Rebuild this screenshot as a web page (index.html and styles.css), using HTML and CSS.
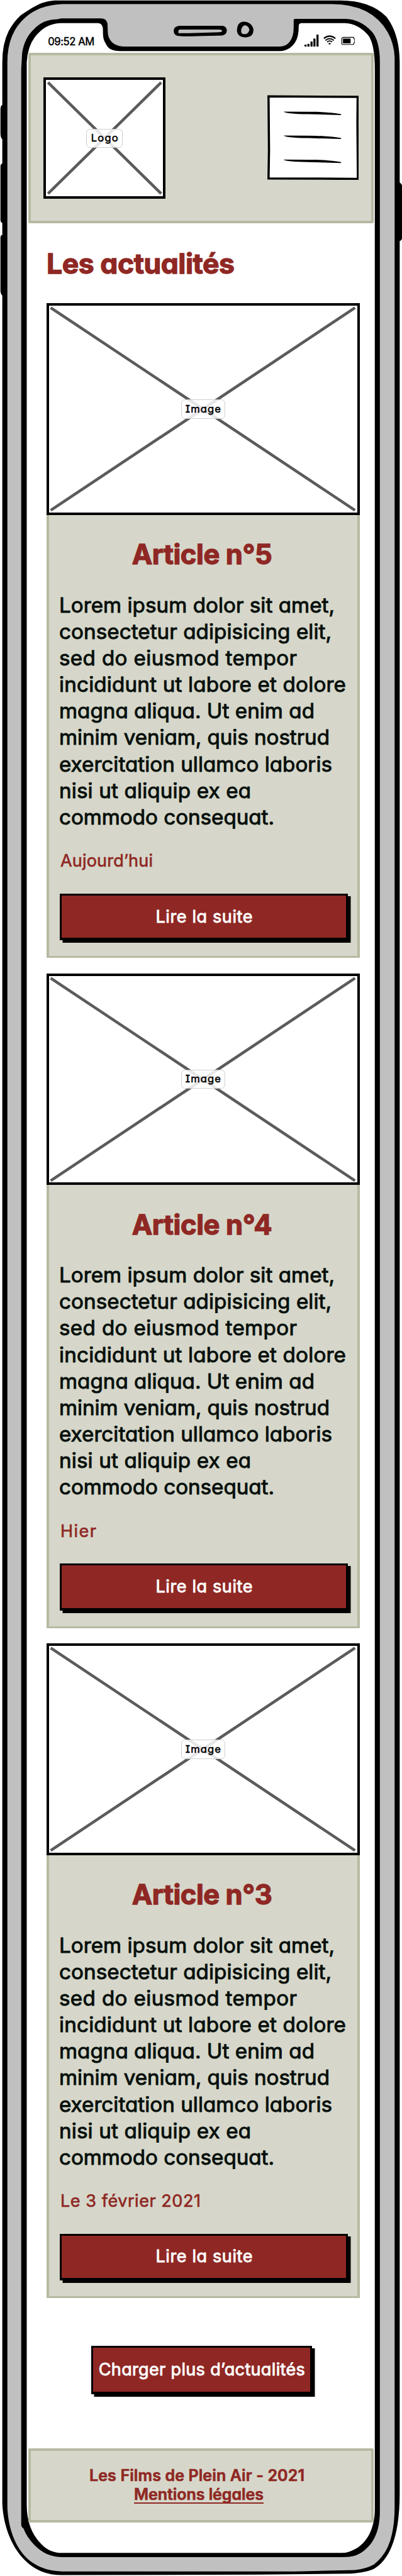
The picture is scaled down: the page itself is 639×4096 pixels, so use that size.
FILE: index.html
```
<!DOCTYPE html>
<html lang="fr">
<head>
<meta charset="utf-8">
<title>Les actualités</title>
<link rel="stylesheet" href="styles.css">
</head>
<body>
<div class="phone">
  <svg class="shell" viewBox="0 0 872 5590" preserveAspectRatio="none" aria-hidden="true">
    <!-- side buttons -->
    <path d="M16 228H5Q1 229 1 238V288Q1 299 5 302H16ZM16 355H5Q1 356 1 362V478Q2 484 6 484H16ZM16 510H4Q1 511 1 516V632Q2 640 6 642H16ZM856 396H867Q872 399 872 403V516Q872 522 867 523H856Z"/>
    <!-- body -->
    <path d="M118 1Q105 2 92 6C76 12 60 23 45 33Q29 48 19 67Q5 95 5 135V5430C6 5482 30 5555 90 5580Q110 5588 135 5588L560 5587L760 5585Q796 5582 812 5574Q850 5551 862 5480Q867 5450 867 5410V135C867 90 855 58 838 36Q803 1 738 1Z"/>
    <path fill="#c0c0c0" d="M135 9Q85 11 55 38Q16 72 16 135V5440C17 5478 30 5530 66 5558Q96 5580 135 5580H640L770 5577Q795 5574 811 5565Q841 5542 850 5500Q856 5475 856 5440V125Q855 95 841 70Q806 9 720 9Z"/>
    <path d="M133 40H219Q230 40 233 50C234 60 233 73 236 81Q244 101 270 101H607Q620 101 628 91Q637 80 637 60V44Q637 41 640 41H750Q782 42 806 68Q824 88 824 135V5450C824 5490 812 5522 781 5541Q768 5549 745 5549H135Q100 5549 75 5523Q58 5506 51 5487Q46 5484 46 5478V150L48 115Q53 82 74 63Q94 42 123 42Z"/>
    <path fill="#fff" d="M131 50H212Q221 50 223 60C224 70 222 82 228 92C235 106 240 111 270 111H607Q628 110 640 92Q648 80 648 58V55Q649 50 654 50H748Q778 51 800 78Q813 98 813 150V5445C813 5488 795 5525 758 5537Q750 5540 740 5540H135Q107 5540 89 5520Q58 5489 58 5435V135Q60 101 76 80Q98 51 131 50Z"/>
    <!-- speaker and camera -->
    <path d="M393 56H482Q492 57 492 67Q491 76 482 77L425 78.500Q402 79 392 78.500Q377 78 377 69V64Q379 56 393 56Z"/>
    <path fill="#c0c0c0" d="M390 64H477Q482 65 482 68Q480 70 475 70L410 72H387V67Q387 65 390 64Z"/>
    <path d="M529 47Q547 48 550 65Q549 80 535 81Q516 82 514 68Q514 47 529 47Z"/>
    <path fill="#c0c0c0" d="M532 54.500Q540 57 541 65Q538 74 531 74Q523 75 523 67Q524 56 532 54.500Z"/>
  </svg>

  <div class="screen">
    <div class="status">
      <span class="time"><span class="fit" data-w="74">09:52 AM</span></span>
      <svg class="status-icons" viewBox="0 0 110 28" aria-hidden="true">
        <path d="M0 22h4.500v4H0zM6.300 20h4.500v6H6.300zM13 15h4.500v11H13zM19.300 8.500h4.500V26h-4.500zM26 0h4.500v26H26z"/>
        <g fill="none" stroke="#000" stroke-width="3"><path d="M42 8.500Q54.500-2 67 8.500"/><path d="M45.500 12.500Q54.500 5.500 63.500 12.500" stroke-width="2.600"/><path d="M49 16Q54.500 11.500 60 16" stroke-width="2.400"/></g>
        <path d="M51.500 19.500Q54.500 17 57.500 19.500L54.500 22Z"/>
        <path d="M84 6h22.500l1.500 4 1 1v6l-1.500 1-1 3.500H82l-1-1.500V7.500z" fill="none" stroke="#000" stroke-width="1.600"/>
        <path d="M83.500 8.500h16.500v10.500h-16.500z"/>
      </svg>
    </div>

    <header class="header">
      <div class="placeholder logo">
        <svg viewBox="0 0 265 263" preserveAspectRatio="none" aria-hidden="true"><path d="M10 11L255 252M255 11L10 252"/></svg>
        <span class="tag"><span class="fit" data-w="43">Logo</span></span>
      </div>
      <svg class="menu" viewBox="0 0 198 184" aria-hidden="true">
        <path class="menu-box" d="M2.500 3L196 4L195.500 60L196.500 182L100 181.500L2.500 181L3.500 120Z"/>
        <path d="M35.500 36Q75 36 108 36.500Q145 38 160 41.500L160 43.500L90 41.500Q38 41 35.500 36ZM35.500 88Q75 88 108 88.500Q145 90 160 93.500L160 95.500L90 93.500Q38 93 35.500 88ZM35.500 140Q75 140 108 140.500Q145 142 160 145.500L160 147.500L90 145.500Q38 145 35.500 140Z"/>
      </svg>
    </header>

    <main class="news">
      <h1 class="heading"><span class="fit" data-w="299">Les actualités</span></h1>

      <article class="card">
        <div class="placeholder photo">
          <svg viewBox="0 0 679 459" preserveAspectRatio="none" aria-hidden="true"><path d="M9 10L669 449M669 10L9 449"/></svg>
          <span class="tag"><span class="fit" data-w="56">Image</span></span>
        </div>
        <h2 class="title"><span class="fit" data-w="223">Article n°5</span></h2>
        <p class="text">
          <span class="fit" data-w="438">Lorem ipsum dolor sit amet,</span>
          <span class="fit" data-w="433">consectetur adipisicing elit,</span>
          <span class="fit" data-w="378">sed do eiusmod tempor</span>
          <span class="fit" data-w="456">incididunt ut labore et dolore</span>
          <span class="fit" data-w="406">magna aliqua. Ut enim ad</span>
          <span class="fit" data-w="430">minim veniam, quis nostrud</span>
          <span class="fit" data-w="434">exercitation ullamco laboris</span>
          <span class="fit" data-w="305">nisi ut aliquip ex ea</span>
          <span class="fit" data-w="342">commodo consequat.</span>
        </p>
        <p class="date"><span class="fit" data-w="147">Aujourd’hui</span></p>
        <a class="button more"><span class="fit" data-w="154">Lire la suite</span></a>
      </article>

      <article class="card">
        <div class="placeholder photo">
          <svg viewBox="0 0 679 459" preserveAspectRatio="none" aria-hidden="true"><path d="M9 10L669 449M669 10L9 449"/></svg>
          <span class="tag"><span class="fit" data-w="56">Image</span></span>
        </div>
        <h2 class="title"><span class="fit" data-w="223">Article n°4</span></h2>
        <p class="text">
          <span class="fit" data-w="438">Lorem ipsum dolor sit amet,</span>
          <span class="fit" data-w="433">consectetur adipisicing elit,</span>
          <span class="fit" data-w="378">sed do eiusmod tempor</span>
          <span class="fit" data-w="456">incididunt ut labore et dolore</span>
          <span class="fit" data-w="406">magna aliqua. Ut enim ad</span>
          <span class="fit" data-w="430">minim veniam, quis nostrud</span>
          <span class="fit" data-w="434">exercitation ullamco laboris</span>
          <span class="fit" data-w="305">nisi ut aliquip ex ea</span>
          <span class="fit" data-w="342">commodo consequat.</span>
        </p>
        <p class="date"><span class="fit" data-w="57">Hier</span></p>
        <a class="button more"><span class="fit" data-w="154">Lire la suite</span></a>
      </article>

      <article class="card">
        <div class="placeholder photo">
          <svg viewBox="0 0 679 459" preserveAspectRatio="none" aria-hidden="true"><path d="M9 10L669 449M669 10L9 449"/></svg>
          <span class="tag"><span class="fit" data-w="56">Image</span></span>
        </div>
        <h2 class="title"><span class="fit" data-w="223">Article n°3</span></h2>
        <p class="text">
          <span class="fit" data-w="438">Lorem ipsum dolor sit amet,</span>
          <span class="fit" data-w="433">consectetur adipisicing elit,</span>
          <span class="fit" data-w="378">sed do eiusmod tempor</span>
          <span class="fit" data-w="456">incididunt ut labore et dolore</span>
          <span class="fit" data-w="406">magna aliqua. Ut enim ad</span>
          <span class="fit" data-w="430">minim veniam, quis nostrud</span>
          <span class="fit" data-w="434">exercitation ullamco laboris</span>
          <span class="fit" data-w="305">nisi ut aliquip ex ea</span>
          <span class="fit" data-w="342">commodo consequat.</span>
        </p>
        <p class="date"><span class="fit" data-w="223">Le 3 février 2021</span></p>
        <a class="button more"><span class="fit" data-w="154">Lire la suite</span></a>
      </article>

      <a class="button load"><span class="fit" data-w="328">Charger plus d’actualités</span></a>
    </main>

    <footer class="footer">
      <span class="copyright"><span class="fit" data-w="342">Les Films de Plein Air - 2021</span></span>
      <a class="legal"><span class="fit" data-w="206">Mentions légales</span></a>
    </footer>
  </div>
</div>
<script src="fit.js"></script>
</body>
</html>
```
FILE: styles.css
```
:root {
  --red: #8f2824;
  --sage: #d6d7ca;
  --sage-edge: #b7b9a2;
}

* { box-sizing: border-box; }

body {
  margin: 0;
  background: #fff;
  color: #000;
  font-family: Inter, "Noto Sans", sans-serif;
  font-feature-settings: "cv11", "cv08";
}

h1, h2, p { margin: 0; }

.phone {
  position: relative;
  width: 639px;
  height: 4096px;
  overflow: hidden;
}

.shell {
  position: absolute;
  inset: 0;
  width: 639px;
  height: 4096px;
}

.screen {
  position: relative;
  display: flex;
  flex-direction: column;
  width: 549.600px;
  margin-left: 44.700px;
}

.fit {
  display: inline-block;
  white-space: nowrap;
}

/* Status bar */
.status {
  display: flex;
  justify-content: space-between;
  align-items: flex-start;
  height: 84.300px;
  padding: 56px 30px 0 31.500px;
}

.time {
  font-size: 16.600px;
  line-height: 20px;
  -webkit-text-stroke: 0.500px #000;
}

.status-icons {
  width: 80.600px;
  height: 20.500px;
  margin-top: -1.500px;
}

/* Header */
.header {
  display: flex;
  justify-content: space-between;
  align-items: center;
  height: 271px;
  padding: 0 20.300px;
  border: 4px solid var(--sage-edge);
  border-radius: 2px;
  background: var(--sage);
}

.placeholder {
  display: grid;
  place-items: center;
  background: #fff;
  border: 4px solid #000;
}

.placeholder > svg {
  grid-area: 1 / 1;
  width: calc(100% + 8px);
  height: calc(100% + 8px);
  margin: -4px;
  fill: none;
  stroke: #5b5b5d;
  stroke-width: 6.200;
}

.tag {
  grid-area: 1 / 1;
  z-index: 1;
  display: grid;
  place-items: center;
  width: 70.500px;
  height: 30.500px;
  padding-bottom: 1px;
  border: 1.500px solid #cfcfcf;
  border-radius: 6px;
  background: rgba(255, 255, 255, 0.850);
  font-size: 16.500px;
  line-height: 20px;
  -webkit-text-stroke: 0.600px #000;
}

.logo {
  width: 194.500px;
  height: 193px;
}

.logo .tag { width: 58.500px; }

.menu {
  width: 145px;
  height: 135px;
  margin-bottom: 2px;
}

.menu-box {
  fill: #fff;
  stroke: #000;
  stroke-width: 4.800;
}

/* News list */
.news {
  display: flex;
  flex-direction: column;
  padding: 35.300px 22.700px 0 29.300px;
}

.heading {
  color: var(--red);
  font-size: 44.500px;
  font-weight: 700;
  line-height: 56px;
  margin-bottom: 35.500px;
  -webkit-text-stroke: 1.300px var(--red);
}

.card {
  width: 497.600px;
  height: 1041.300px;
  margin-bottom: 24.200px;
  border: solid var(--sage-edge);
  border-width: 0 4px 3px;
  background: var(--sage);
}

.photo {
  height: 336.700px;
  margin: 0 -4px;
}

.title {
  margin: 34.600px 3px 0 0;
  color: var(--red);
  font-size: 43.500px;
  font-weight: 700;
  line-height: 56px;
  text-align: center;
  -webkit-text-stroke: 1.300px var(--red);
}

.text {
  display: flex;
  flex-direction: column;
  align-items: flex-start;
  margin: 31.300px 0 0 16px;
  color: #08100c;
  font-size: 33.200px;
  line-height: 42.150px;
  -webkit-text-stroke: 1px #08100c;
}

.date {
  margin: 31px 0 33.700px 18px;
  color: var(--red);
  font-size: 27px;
  line-height: 36px;
  -webkit-text-stroke: 0.700px var(--red);
}

.button {
  display: grid;
  place-items: center;
  border: 3px solid #000;
  border-width: 3px 3px 4px;
  background: var(--red);
  box-shadow: 4.500px 4px 0 #000;
  color: #fff;
  font-size: 27px;
  line-height: 36px;
  -webkit-text-stroke: 0.900px #fff;
}

.more {
  width: 458px;
  height: 74.500px;
  margin-left: 17.500px;
}

.load {
  width: 351px;
  height: 77px;
  margin: 51.300px 0 0 71.300px;
}

/* Footer */
.footer {
  display: flex;
  flex-direction: column;
  align-items: center;
  height: 118px;
  margin-top: 85.700px;
  padding-top: 25.700px;
  border: 4px solid var(--sage-edge);
  border-radius: 2px;
  background: var(--sage);
  color: var(--red);
  font-size: 25px;
  font-weight: 600;
  line-height: 29.300px;
  -webkit-text-stroke: 0.700px var(--red);
}

.copyright { margin-right: 13px; }

.legal { margin-right: 7px; }

.legal .fit {
  height: 29px;
  border-bottom: 2.500px solid var(--red);
  line-height: 29.300px;
}
```
FILE: fit.js
```
// Tracks each line of text so that it spans its nominal width.
document.querySelectorAll('.fit').forEach(function (line) {
  var gaps = line.textContent.length - 1;
  var width = line.getBoundingClientRect().width;
  var spacing = (Number(line.dataset.w) - width) / gaps;
  line.style.letterSpacing = spacing + 'px';
  line.style.marginRight = -spacing + 'px';
});
```
